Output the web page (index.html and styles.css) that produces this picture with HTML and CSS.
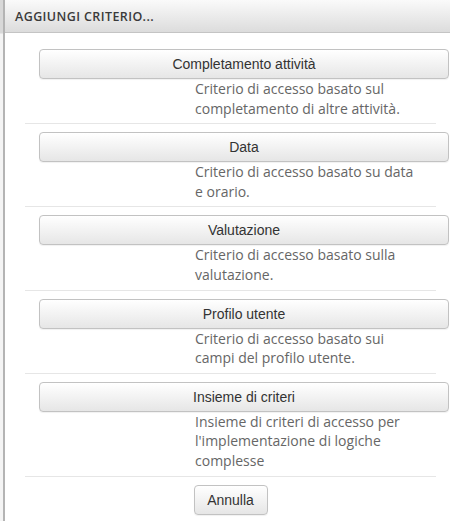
FILE: index.html
```html
<!DOCTYPE html>
<html lang="it">
<head>
<meta charset="utf-8">
<title>Aggiungi criterio</title>
<link rel="stylesheet" href="styles.css">
</head>
<body>
<div class="page">
  <div class="strip"></div>
  <div class="dialog">
    <div class="dialog-header">Aggiungi criterio...</div>
    <div class="dialog-body">
      <div class="option">
        <button class="btn btn-wide" type="button">Completamento attività</button>
        <div class="desc">Criterio di accesso basato sul completamento di altre attività.</div>
      </div>
      <div class="option">
        <button class="btn btn-wide" type="button">Data</button>
        <div class="desc">Criterio di accesso basato su data e orario.</div>
      </div>
      <div class="option">
        <button class="btn btn-wide" type="button">Valutazione</button>
        <div class="desc">Criterio di accesso basato sulla valutazione.</div>
      </div>
      <div class="option">
        <button class="btn btn-wide" type="button">Profilo utente</button>
        <div class="desc">Criterio di accesso basato sui campi del profilo utente.</div>
      </div>
      <div class="option">
        <button class="btn btn-wide" type="button">Insieme di criteri</button>
        <div class="desc">Insieme di criteri di accesso per l'implementazione di logiche complesse</div>
      </div>
      <div class="actions">
        <button class="btn btn-cancel" type="button">Annulla</button>
      </div>
    </div>
  </div>
</div>
</body>
</html>
```

FILE: styles.css
```css
html, body {
  margin: 0;
  padding: 0;
  background: #ffffff;
}

.page {
  display: flex;
  width: 450px;
  height: 521px;
  overflow: hidden;
}

.strip {
  width: 3px;
  flex: 0 0 3px;
  background: linear-gradient(to bottom, #d8d8d8 0, #d8d8d8 33px, #f4f4f4 34px, #f4f4f4 100%);
}

.dialog {
  flex: 1;
  border-left: 2px solid #b4b4b4;
  background: #ffffff;
  min-width: 0;
}

.dialog-header {
  height: 33px;
  box-sizing: border-box;
  border-bottom: 1px solid #c4c4c4;
  background: linear-gradient(to bottom, #fafafa 0%, #dcdcdc 100%);
  padding-left: 10px;
  display: flex;
  align-items: center;
  font-family: "Open Sans", sans-serif;
  font-size: 12.5px;
  font-weight: 600;
  letter-spacing: 0.4px;
  text-transform: uppercase;
  color: #3a3a3a;
}

.dialog-body {
  padding: 16px 0 0 20px;
  width: 411px;
}

.option {
  border-bottom: 1px solid #e6e6e6;
  padding-bottom: 5px;
  margin-bottom: 8px;
}

.btn {
  display: block;
  box-sizing: border-box;
  height: 30px;
  border: 1px solid #c2c2c2;
  border-radius: 4px;
  background: linear-gradient(to bottom, #ffffff 0%, #e6e6e6 100%);
  font-family: "Liberation Sans", Arial, sans-serif;
  font-size: 14px;
  color: #333333;
  padding: 0 10px;
  box-shadow: 0 1px 1px rgba(0, 0, 0, 0.06);
}

.btn-wide {
  width: 410px;
  margin-left: 14px;
}

.desc {
  margin-left: 170px;
  width: 226px;
  font-family: "Open Sans", sans-serif;
  font-size: 14px;
  line-height: 19.6px;
  color: #666666;
}

.actions {
  display: flex;
  justify-content: center;
}

.btn-cancel {
  width: 74px;
}
```
